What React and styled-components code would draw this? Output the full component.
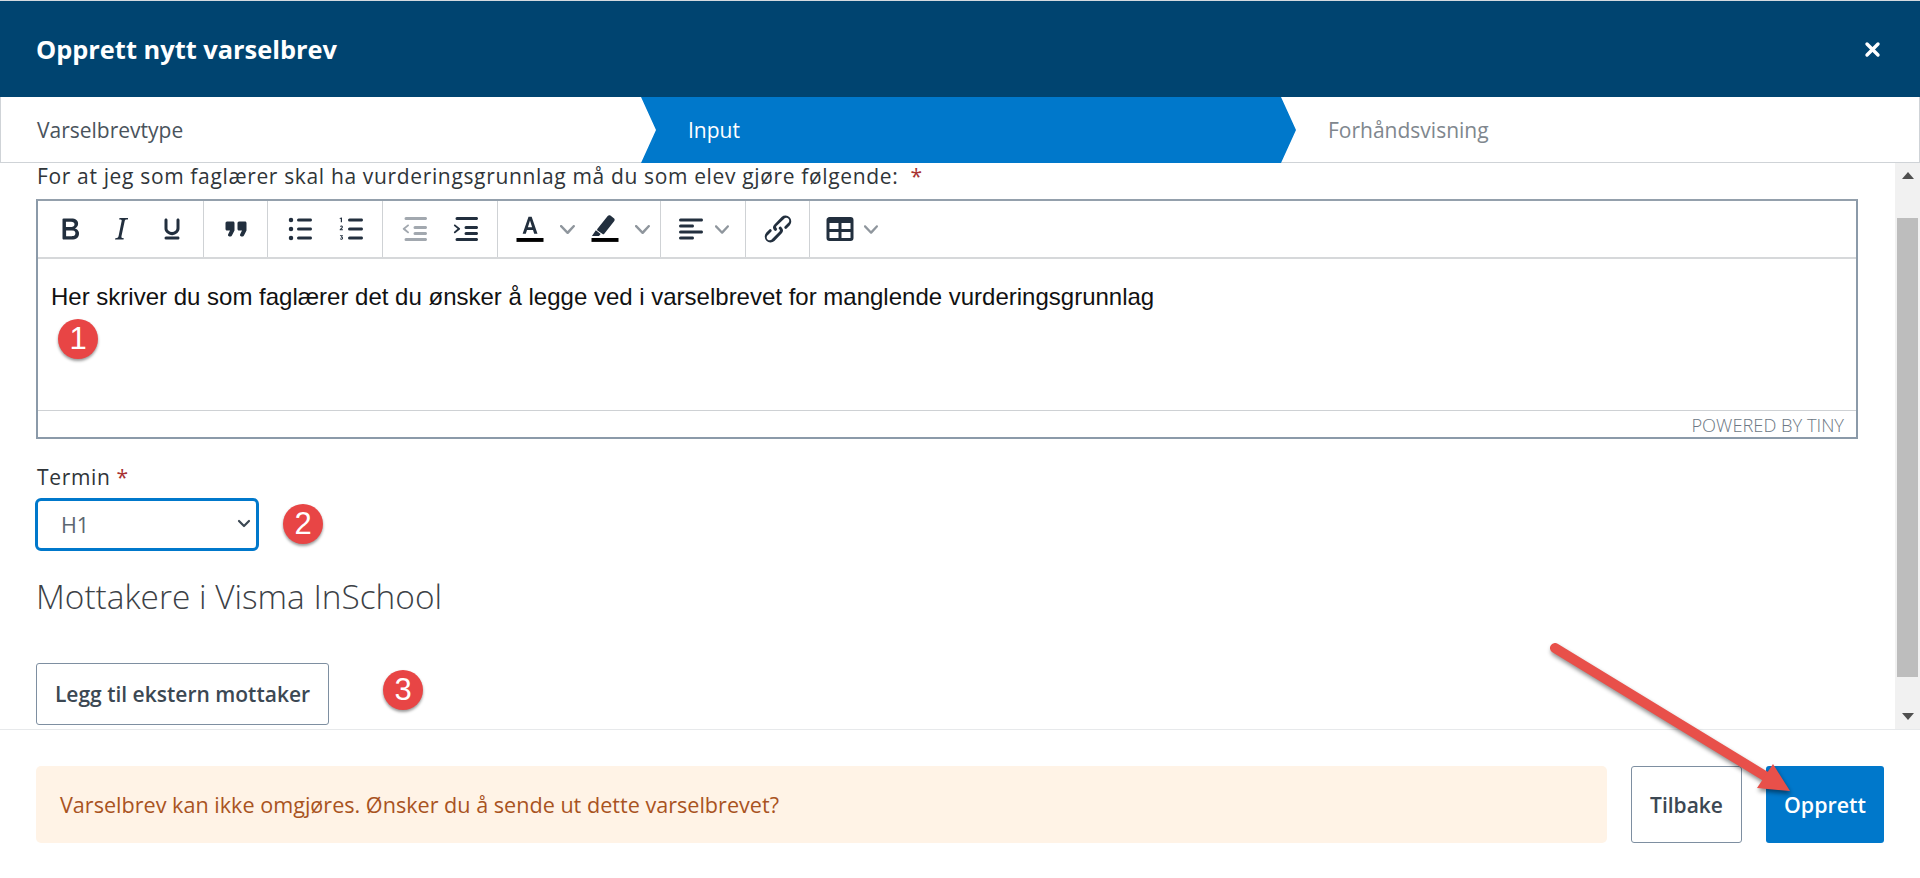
import React from "react";
import styled, { createGlobalStyle } from "styled-components";

const Global = createGlobalStyle`
  html, body { margin: 0; padding: 0; background: #fff; }
  body { font-family: "Open Sans", "Liberation Sans", sans-serif; color: #333; }
  * { box-sizing: border-box; }
`;

const Page = styled.div`
  position: relative;
  width: 1920px;
  height: 878px;
  overflow: hidden;
  display: flex;
  flex-direction: column;
  padding-top: 1px;
  background: #fff;
  box-shadow: inset 0 1px 0 #d4dadf;
`;

const Header = styled.header`
  height: 96px;
  flex: none;
  background: #004470;
  display: flex;
  align-items: center;
  justify-content: space-between;
  padding: 0 39px 0 36px;
  color: #fff;
`;

const Title = styled.h1`
  margin: 0;
  font-size: 25.4px;
  font-weight: 700;
  line-height: 32px;
`;

const CloseButton = styled.button`
  border: 0;
  padding: 0;
  background: none;
  color: #fff;
  display: flex;
`;

const Steps = styled.nav`
  height: 66px;
  flex: none;
  display: flex;
  border: 1px solid #cfd3d7;
  border-top: 0;
`;

const Step = styled.div`
  display: flex;
  align-items: center;
  font-size: 21px;
  color: ${(p) => (p.$muted ? "#80878e" : "#4a535c")};
  width: ${(p) => p.$width};
  flex: ${(p) => (p.$grow ? 1 : "none")};
  padding-left: ${(p) => p.$pad};
`;

const ActiveStep = styled(Step)`
  color: #fff;
  background: #0078cb;
  height: 66px;
  clip-path: polygon(0 0, calc(100% - 15px) 0, 100% 50%, calc(100% - 15px) 100%, 0 100%, 15px 50%);
`;

const Middle = styled.div`
  flex: none;
  height: 567px;
  display: flex;
  border-bottom: 1px solid #e7e9eb;
`;

const Content = styled.main`
  flex: 1;
  min-width: 0;
  padding: 0 37px 0 37px;
  overflow: hidden;
`;

const Label = styled.label`
  display: block;
  font-size: 21px;
  font-weight: 500;
  line-height: 26px;
  letter-spacing: 0.65px;
  color: #303539;
`;

const Star = styled.span`
  color: #a83232;
  margin-left: ${(p) => p.$gap};
`;

const Editor = styled.div`
  margin: 10px 0 25px -1px;
  height: 240px;
  border: 2px solid #8b9aa9;
  border-top-color: #94a0ac;
  display: flex;
  flex-direction: column;
`;

const Toolbar = styled.div`
  height: 58px;
  flex: none;
  display: flex;
  border-bottom: 2px solid #d6d8da;
`;

const ToolGroup = styled.div`
  display: flex;
  align-items: center;
  flex: none;
  width: ${(p) => p.$width || "auto"};
  padding: 0 6px;
  border-right: ${(p) => (p.$last ? "0" : "1px solid #cfd2d5")};
`;

const ToolButton = styled.span`
  display: flex;
  align-items: center;
  justify-content: center;
  width: ${(p) => p.$width || "51px"};
  height: 48px;
  flex: none;
  color: ${(p) => (p.$disabled ? "#a2a8af" : "#222f3e")};
`;

const Caret = styled.span`
  display: flex;
  align-items: center;
  justify-content: center;
  width: ${(p) => p.$width};
  height: 48px;
  flex: none;
  color: #8f969d;
`;

const EditArea = styled.div`
  flex: 1;
  padding: 24px 0 0 13px;
  font-family: "Liberation Sans", Arial, sans-serif;
  font-size: 24px;
  line-height: 28px;
  color: #111;
  white-space: nowrap;
`;

const StatusBar = styled.div`
  height: 27px;
  flex: none;
  border-top: 1px solid #ced1d4;
  display: flex;
  align-items: center;
  justify-content: flex-end;
  padding-right: 12px;
  font-size: 18.3px;
  font-weight: 300;
  color: #6c7884;
  text-transform: uppercase;
`;

const SelectBox = styled.div`
  position: relative;
  width: 224px;
  margin: 8px 0 26px -2px;
  color: #3c4853;
`;

const Select = styled.select`
  display: block;
  width: 100%;
  height: 53px;
  padding: 0 8px 0 23px;
  border: 3px solid #0078cb;
  border-radius: 6px;
  background: #fff;
  color: #5b6670;
  font-family: "Open Sans", sans-serif;
  font-size: 21.5px;
  outline: none;
  appearance: none;
`;

const SelectChevron = styled.svg`
  position: absolute;
  right: 8px;
  top: 21px;
  pointer-events: none;
`;

const Heading = styled.h2`
  margin: 0 0 48px -1px;
  font-size: 33.4px;
  font-weight: 300;
  line-height: 38px;
  color: #3c4146;
`;

const OutlineButton = styled.button`
  display: block;
  height: ${(p) => p.$height};
  width: ${(p) => p.$width};
  flex: none;
  border: 1px solid #7e8fa1;
  border-radius: 3px;
  background: #fff;
  color: #3c4853;
  font-family: "Open Sans", sans-serif;
  font-size: 21px;
  font-weight: 600;
  padding: 0;
  margin-left: ${(p) => p.$offset || "0"};
`;

const Scrollbar = styled.div`
  width: 25px;
  flex: none;
  background: #f1f1f1;
  display: flex;
  flex-direction: column;
  align-items: center;
  padding: 9px 0;
`;

const ArrowUp = styled.span`
  width: 0;
  height: 0;
  border-left: 6px solid transparent;
  border-right: 6px solid transparent;
  border-bottom: 7px solid #4f4f4f;
  flex: none;
`;

const ArrowDown = styled(ArrowUp)`
  border-bottom: 0;
  border-top: 7px solid #4f4f4f;
`;

const Thumb = styled.span`
  width: 21px;
  height: 459px;
  margin: 39px 0 36px;
  background: #bdbdbd;
  flex: none;
`;

const Footer = styled.footer`
  flex: 1;
  display: flex;
  align-items: flex-start;
  padding: 36px 36px 0 36px;
  gap: 24px;
`;

const Alert = styled.div`
  flex: none;
  width: 1571px;
  height: 77px;
  background: #fff3e6;
  border-radius: 5px;
  display: flex;
  align-items: center;
  padding-left: 24px;
  font-size: 21.6px;
  color: #a9531f;
`;

const PrimaryButton = styled.button`
  height: 77px;
  width: 118px;
  flex: none;
  border: 0;
  border-radius: 3px;
  background: #0078cb;
  color: #fff;
  font-family: "Open Sans", sans-serif;
  font-size: 21.4px;
  font-weight: 600;
  padding: 0;
`;

const Badge = styled.span`
  position: absolute;
  left: ${(p) => p.$x}px;
  top: ${(p) => p.$y}px;
  width: 40px;
  height: 40px;
  border-radius: 50%;
  background: #e84545;
  color: #fff;
  font-family: "Liberation Sans", Arial, sans-serif;
  font-size: 31px;
  line-height: 40px;
  text-align: center;
  box-shadow: 0 2px 3px rgba(0, 0, 0, 0.4);
`;

const ArrowLayer = styled.svg`
  position: absolute;
  left: 1540px;
  top: 630px;
  overflow: visible;
  filter: drop-shadow(1px 3px 2px rgba(0, 0, 0, 0.45));
`;

const Ic = ({ children, size = 36, vb = 24 }) => (
  <svg width={size} height={size} viewBox={`0 0 ${vb} ${vb}`} fill="currentColor" aria-hidden="true">
    {children}
  </svg>
);

const Chevron = () => (
  <svg width="15" height="15" viewBox="0 0 10 10" fill="currentColor" aria-hidden="true">
    <path d="M8.7 2.2c.3-.3.8-.3 1 0 .4.4.4.9 0 1.2L5.7 7.8c-.3.3-.9.3-1.2 0L.2 3.4a.8.8 0 0 1 0-1.2c.3-.3.8-.3 1.1 0L5 6l3.7-3.8z" />
  </svg>
);

const lines = "M11 5h8c.6 0 1 .4 1 1s-.4 1-1 1h-8a1 1 0 0 1 0-2zm0 6h8c.6 0 1 .4 1 1s-.4 1-1 1h-8a1 1 0 0 1 0-2zm0 6h8c.6 0 1 .4 1 1s-.4 1-1 1h-8a1 1 0 0 1 0-2z";
const indentLines = "M6 5h13c.6 0 1 .4 1 1s-.4 1-1 1H6a1 1 0 1 1 0-2zm6 6h7c.6 0 1 .4 1 1s-.4 1-1 1h-7a1 1 0 0 1 0-2zm0 4h7c.6 0 1 .4 1 1s-.4 1-1 1h-7a1 1 0 0 1 0-2zM6 19h13c.6 0 1 .4 1 1s-.4 1-1 1H6a1 1 0 0 1 0-2z";

const icons = {
  bold: <path d="M7.8 19c-.3 0-.5 0-.6-.2l-.2-.5V5.7c0-.2 0-.4.2-.5l.6-.2h5c1.5 0 2.7.3 3.5 1 .7.6 1.1 1.4 1.1 2.5a3 3 0 0 1-.6 1.9c-.4.6-1 1-1.6 1.2.4.1.9.3 1.3.6s.8.7 1 1.2c.4.4.5 1 .5 1.6 0 1.3-.4 2.3-1.3 3-.8.7-2.1 1-3.8 1H7.8zm5-8.3c.6 0 1.2-.1 1.6-.5.4-.3.6-.7.6-1.3 0-1.1-.8-1.7-2.3-1.7H9.3v3.5h3.4zm.5 6c.7 0 1.3-.1 1.7-.4.4-.4.6-.9.6-1.5s-.2-1-.7-1.4c-.4-.3-1-.4-2-.4H9.4v3.8h4z" fillRule="evenodd" />,
  italic: <path d="M16.7 4.7l-.1.9h-.3c-.6 0-1 0-1.4.3-.3.3-.4.6-.5 1.1l-2.1 9.8v.6c0 .5.4.8 1.4.8h.2l-.2.8H8l.2-.8h.2c1.1 0 1.8-.5 2-1.5l2-9.8.1-.5c0-.6-.4-.8-1.4-.8h-.3l.2-.9h5.8z" fillRule="evenodd" />,
  underline: <path d="M16 5c.6 0 1 .4 1 1v5.5a4 4 0 0 1-.4 1.8l-1 1.4a5.3 5.3 0 0 1-5.5 1 5 5 0 0 1-1.6-1c-.5-.4-.8-.9-1.1-1.4a4 4 0 0 1-.4-1.8V6c0-.6.4-1 1-1s1 .4 1 1v5.5c0 .3 0 .6.2 1l.6.7a3.3 3.3 0 0 0 2.2.8 3.4 3.4 0 0 0 2.2-.8c.3-.2.4-.5.6-.8l.2-.9V6c0-.6.4-1 1-1zM8 17h8c.6 0 1 .4 1 1s-.4 1-1 1H8a1 1 0 0 1 0-2z" fillRule="evenodd" />,
  quote: <path d="M7.5 17h.9c.4 0 .7-.2.9-.6L11 13V8c0-.6-.4-1-1-1H6a1 1 0 0 0-1 1v4c0 .6.4 1 1 1h2l-1.3 2.7a1 1 0 0 0 .8 1.3zm8 0h.9c.4 0 .7-.2.9-.6L19 13V8c0-.6-.4-1-1-1h-4a1 1 0 0 0-1 1v4c0 .6.4 1 1 1h2l-1.3 2.7a1 1 0 0 0 .8 1.3z" />,
  bullets: (
    <>
      <path d={lines} />
      <circle cx="6" cy="6" r="1.5" />
      <circle cx="6" cy="12" r="1.5" />
      <circle cx="6" cy="18" r="1.5" />
    </>
  ),
  numbers: (
    <>
      <path d={lines} />
      <path d="M6 4.3v3.2h-.8V5.1l-.7.2v-.7L5.9 4.3z" />
      <path d="M4.6 10.2c.2-.3.6-.5 1-.5.6 0 1 .4 1 .9 0 .4-.2.7-.5 1l-.6.5h1.1v.7H4.5v-.6l1.1-1c.2-.2.2-.3.2-.5 0-.2-.1-.3-.3-.3-.2 0-.3.1-.4.3z" />
      <path d="M4.6 16.1h2v.5l-.7.6c.5.1.8.4.8.9 0 .6-.5 1-1.1 1-.4 0-.8-.2-1-.5l.5-.4c.1.2.3.3.5.3s.4-.1.4-.4-.2-.4-.5-.4h-.3v-.5l.6-.5h-1.1z" />
    </>
  ),
  outdent: (
    <>
      <path d={indentLines} transform="translate(0 -1)" />
      <path d="M8.2 10.3L5.5 12.6l2.7 2.3c.3.3.3.7 0 1-.3.2-.7.2-1 0L3.7 13c-.3-.2-.3-.6 0-.8l3.5-2.9c.3-.2.7-.2 1 0 .3.3.3.7 0 1z" transform="translate(0 -.5) scale(.85) translate(1 2)" />
    </>
  ),
  indent: (
    <>
      <path d={indentLines} transform="translate(0 -1)" />
      <path d="M4.8 10.3l2.7 2.3-2.7 2.3c-.3.3-.3.7 0 1 .3.2.7.2 1 0l3.5-2.9c.3-.2.3-.6 0-.8L5.8 9.3c-.3-.2-.7-.2-1 0-.3.3-.3.7 0 1z" transform="translate(0 -.5) scale(.85) translate(0 2)" />
    </>
  ),
  textColor: (
    <>
      <path d="M3 18h18v2.6H3z" fill="#000" />
      <path d="M11 3.8h2.1l3.9 11.4h-2.2l-.8-2.6H10l-.8 2.6H7.1L11 3.8zm2.4 7.1L12 6.4l-1.4 4.5h2.8z" />
    </>
  ),
  highlight: (
    <>
      <path d="M3 18h18v2.6H3z" fill="#000" />
      <path d="M3.3 16.6l2.6-3.7 3.2 2.4-1.1 1.3zM7 11.8l6.8-8.5c.5-.6 1.2-.7 1.8-.3l2.3 1.8c.6.5.7 1.2.3 1.8l-6.7 8.6c-.3.4-.8.4-1.1.2L7 13c-.3-.3-.4-.8 0-1.2z" />
    </>
  ),
  align: <path d="M5 5h14c.6 0 1 .4 1 1s-.4 1-1 1H5a1 1 0 1 1 0-2zm0 4h8c.6 0 1 .4 1 1s-.4 1-1 1H5a1 1 0 0 1 0-2zm0 8h8c.6 0 1 .4 1 1s-.4 1-1 1H5a1 1 0 0 1 0-2zm0-4h14c.6 0 1 .4 1 1s-.4 1-1 1H5a1 1 0 0 1 0-2z" fillRule="evenodd" />,
  link: <path d="M6.2 12.3a1 1 0 0 1 1.4 1.4l-2.1 2.1a2 2 0 1 0 2.7 2.7l4.8-4.8a1 1 0 0 0 0-1.4 1 1 0 1 1 1.4-1.3 2.9 2.9 0 0 1 0 4L9.6 20a3.9 3.9 0 0 1-5.5-5.5l2-2zm11.6-.6a1 1 0 0 1-1.4-1.4l2-2a2 2 0 1 0-2.6-2.8L11 10a1 1 0 0 0 0 1.4A1 1 0 1 1 9.6 13a2.9 2.9 0 0 1 0-4L14.4 4a3.9 3.9 0 0 1 5.5 5.5l-2 2z" />,
  table: <path d="M19 4a2 2 0 0 1 2 2v12a2 2 0 0 1-2 2H5a2 2 0 0 1-2-2V6c0-1.1.9-2 2-2h14zM5 14v4h6v-4H5zm14 0h-6v4h6v-4zm0-6h-6v4h6V8zM5 12h6V8H5v4z" fillRule="evenodd" />,
};

const Tool = ({ name, width, disabled }) => (
  <ToolButton $width={width} $disabled={disabled}>
    <Ic>{icons[name]}</Ic>
  </ToolButton>
);

const Down = ({ width }) => (
  <Caret $width={width}>
    <Chevron />
  </Caret>
);

export default function App() {
  return (
    <Page>
      <Global />
      <Header>
        <Title>Opprett nytt varselbrev</Title>
        <CloseButton aria-label="Lukk">
          <svg width="17" height="17" viewBox="0 0 17 17" fill="none" stroke="currentColor" strokeWidth="3.4" strokeLinecap="round">
            <path d="M3 3l11 11M14 3L3 14" />
          </svg>
        </CloseButton>
      </Header>
      <Steps>
        <Step $width="640px" $pad="36px">Varselbrevtype</Step>
        <ActiveStep $width="655px" $pad="47px">Input</ActiveStep>
        <Step $grow $muted $pad="32px">Forhåndsvisning</Step>
      </Steps>
      <Middle>
        <Content>
          <Label>
            For at jeg som faglærer skal ha vurderingsgrunnlag må du som elev gjøre følgende:
            <Star $gap="12px">*</Star>
          </Label>
          <Editor>
            <Toolbar>
              <ToolGroup>
                <Tool name="bold" />
                <Tool name="italic" />
                <Tool name="underline" />
              </ToolGroup>
              <ToolGroup>
                <Tool name="quote" />
              </ToolGroup>
              <ToolGroup>
                <Tool name="bullets" />
                <Tool name="numbers" />
              </ToolGroup>
              <ToolGroup>
                <Tool name="outdent" disabled />
                <Tool name="indent" />
              </ToolGroup>
              <ToolGroup>
                <Tool name="textColor" />
                <Down width="24px" />
                <Tool name="highlight" />
                <Down width="24px" />
              </ToolGroup>
              <ToolGroup $width="85px">
                <Tool name="align" width="48px" />
                <Down width="14px" />
              </ToolGroup>
              <ToolGroup>
                <Tool name="link" />
              </ToolGroup>
              <ToolGroup $last>
                <Tool name="table" width="48px" />
                <Down width="14px" />
              </ToolGroup>
            </Toolbar>
            <EditArea>Her skriver du som faglærer det du ønsker å legge ved i varselbrevet for manglende vurderingsgrunnlag</EditArea>
            <StatusBar>Powered by Tiny</StatusBar>
          </Editor>
          <Label>
            Termin<Star $gap="6px">*</Star>
          </Label>
          <SelectBox>
            <Select defaultValue="H1" aria-label="Termin">
              <option>H1</option>
              <option>H2</option>
            </Select>
            <SelectChevron width="14" height="10" viewBox="0 0 14 10" fill="none" stroke="currentColor" strokeWidth="2.2" strokeLinecap="round" strokeLinejoin="round" aria-hidden="true">
              <path d="M2 2l5 5 5-5" />
            </SelectChevron>
          </SelectBox>
          <Heading>Mottakere i Visma InSchool</Heading>
          <OutlineButton $width="293px" $height="62px" $offset="-1px">Legg til ekstern mottaker</OutlineButton>
        </Content>
        <Scrollbar>
          <ArrowUp />
          <Thumb />
          <ArrowDown />
        </Scrollbar>
      </Middle>
      <Footer>
        <Alert>Varselbrev kan ikke omgjøres. Ønsker du å sende ut dette varselbrevet?</Alert>
        <OutlineButton $width="111px" $height="77px">Tilbake</OutlineButton>
        <PrimaryButton>Opprett</PrimaryButton>
      </Footer>

      <Badge $x={58} $y={319}>1</Badge>
      <Badge $x={283} $y={504}>2</Badge>
      <Badge $x={383} $y={670}>3</Badge>
      <ArrowLayer width="260" height="170" viewBox="0 0 260 170" aria-hidden="true">
        <path d="M15 18L225 146" stroke="#e8504a" strokeWidth="10" strokeLinecap="round" fill="none" />
        <path d="M233 134L250 161L217 158Z" fill="#e8504a" />
      </ArrowLayer>
    </Page>
  );
}
